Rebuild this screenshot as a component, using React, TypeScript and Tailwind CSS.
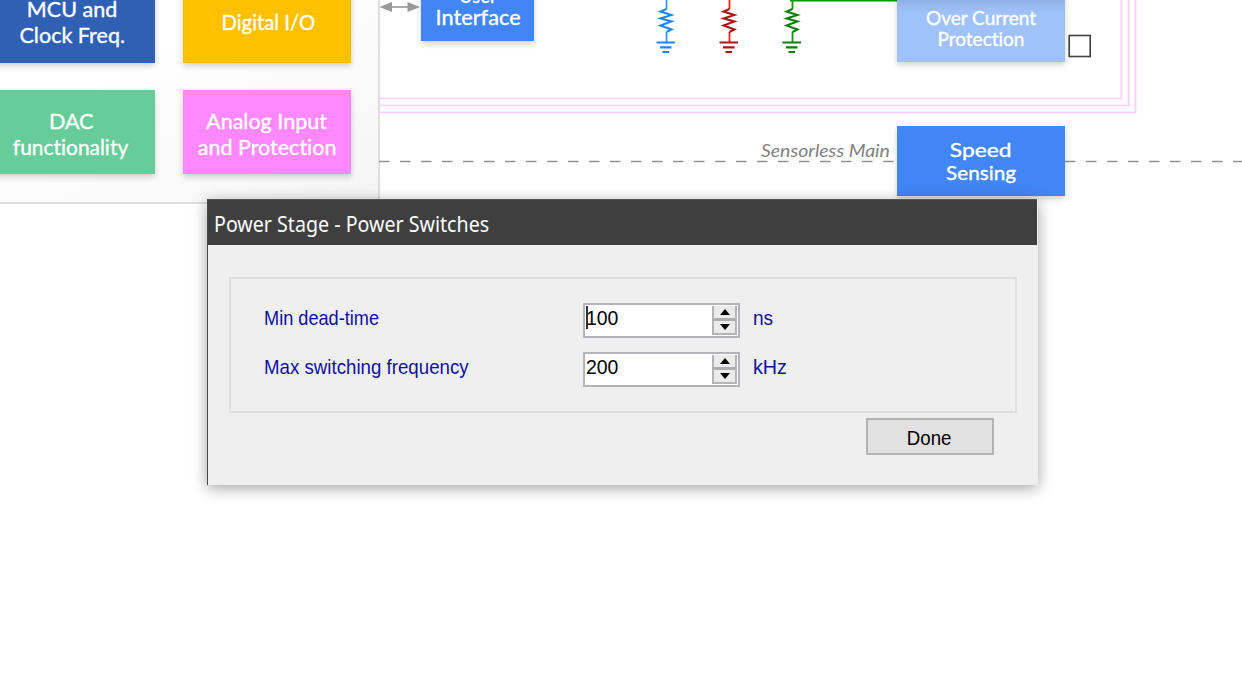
import React from "react";

type NodeProps = { box: string; lines: { text: string; scale: string }[]; leading: string };

function Block({ box, lines, leading }: NodeProps) {
  return (
    <div
      className={`absolute flex flex-col items-center justify-center whitespace-nowrap font-['Lato',sans-serif] font-normal text-white shadow-[0_3px_6px_rgba(0,0,0,0.18)] [-webkit-text-stroke:0.35px_white] [font-variant-ligatures:none] ${box}`}
    >
      {lines.map((line) => (
        <div key={line.text} className={`${leading} ${line.scale}`}>
          {line.text}
        </div>
      ))}
    </div>
  );
}

function Resistor({ x, wire, part }: { x: number; wire: string; part: string }) {
  return (
    <g transform={`translate(${x} 0)`} fill="none">
      <path d="M0.5 0V9M0.5 32V42" stroke={wire} strokeWidth="1.8" />
      <path
        d="M0.5 9L-5.500 11.5L5.500 15L-5.500 18.5L5.500 21.5L-5.500 25.5L5.500 29.5L0.5 32"
        stroke={part}
        strokeWidth="2"
      />
      <path d="M-9.5 42.5H9" stroke={part} strokeWidth="2" />
      <path d="M-6 47.3H5.500M-3.500 52H3" stroke={part} strokeWidth="2.2" />
    </g>
  );
}

function Wiring() {
  return (
    <svg className="absolute left-0 top-0" width="1242" height="678" viewBox="0 0 1242 678">
      <g stroke="#999" fill="#999">
        <path d="M388 7H412" strokeWidth="1.6" />
        <path d="M379.500 7L392 2V12ZM420 7L407.500 2V12Z" stroke="none" />
      </g>
      <g fill="none" stroke="#ffccff" strokeWidth="1.7">
        <path d="M380 98.500H1121.500V0" />
        <path d="M380 105.500H1128.700V0" />
        <path d="M380 112.500H1135.500V0" />
      </g>
      <path d="M379 161.500H897" stroke="#929292" strokeWidth="1.5" strokeDasharray="10.500 10.500" />
      <path d="M1065 161.500H1242" stroke="#929292" strokeWidth="1.5" strokeDasharray="10.500 10.500" />
      <path d="M790 0.500H897" stroke="#009900" strokeWidth="2" />
      <Resistor x={666} wire="#3399ff" part="#1a86f5" />
      <Resistor x={729} wire="#ff1a1a" part="#ab1414" />
      <Resistor x={792} wire="#00a000" part="#0b7d0b" />
      <rect x="1069.200" y="35.500" width="21" height="21" fill="#fff" stroke="#404040" strokeWidth="1.6" />
    </svg>
  );
}

function Spinner() {
  return (
    <div className="mt-px flex h-[29px] w-[25px] flex-col border-x-2 border-b-2 border-[#b4b4b4] bg-[#ebebeb]">
      <div className="flex flex-1 items-center justify-center border-b-[3px] border-[#adadad]">
        <svg width="10" height="6" viewBox="0 0 10 6">
          <path d="M0 6L5 0L10 6Z" />
        </svg>
      </div>
      <div className="flex h-3 items-center justify-center">
        <svg width="10" height="6" viewBox="0 0 10 6">
          <path d="M0 0L5 6L10 0Z" />
        </svg>
      </div>
    </div>
  );
}

function Field({ label, value, unit, scale, unitScale, caret }: {
  label: string; value: string; unit: string; scale: string; unitScale: string; caret?: boolean;
}) {
  return (
    <div className="flex h-[35px] items-start text-[#10109c]">
      <div className="w-[319px] pt-px">
        <span className={`inline-block origin-left ${scale}`}>{label}</span>
      </div>
      <div className="flex h-[35px] w-[157px] justify-between border-2 border-[#b3b3b9] bg-white pr-px text-black">
        <div className="flex items-start pl-px">
          <span className={caret ? "mt-px h-[23px] w-0.5 -mr-0.5 bg-[#333]" : "w-0"} />
          <span className="-mt-px inline-block origin-left scale-x-[0.925]">{value}</span>
        </div>
        <Spinner />
      </div>
      <span className={`ml-3 inline-block origin-left pl-px pt-px ${unitScale}`}>{unit}</span>
    </div>
  );
}

function Dialog() {
  return (
    <div className="absolute left-[207px] top-[199px] flex h-[286px] w-[831px] flex-col whitespace-nowrap border-l border-[#484848] bg-[#efefef] shadow-[0_3px_14px_rgba(0,0,0,0.36)]">
      <div className="mr-px flex h-[46px] shrink-0 items-center border-t border-[#555] bg-[#3f3f3f] pl-1.5 pt-1 font-['Noto_Sans',sans-serif] text-[21px] text-white">
        <span className="inline-block origin-left scale-x-[0.935]">Power Stage - Power Switches</span>
      </div>
      <div className="ml-[21px] mr-[21px] mt-8 flex h-[136px] flex-col gap-3.5 border-2 border-[#dfdfdf] pl-[33px] pt-6 font-['Liberation_Sans',Arial,sans-serif] text-[21px] leading-[27px]">
        <Field label="Min dead-time" value="100" unit="ns" scale="scale-x-[0.865]" unitScale="scale-x-[0.91]" caret />
        <Field label="Max switching frequency" value="200" unit="kHz" scale="scale-x-[0.89]" unitScale="scale-x-[0.94]" />
      </div>
      <button className="ml-auto mr-[44px] mt-[5px] flex h-[37px] w-32 items-center justify-center border-2 border-[#b3b3b3] bg-[#e1e1e1] pr-0.5 pt-0.5 font-['Liberation_Sans',Arial,sans-serif] text-[21px] text-black">
        <span className="inline-block scale-x-[0.89]">Done</span>
      </button>
    </div>
  );
}

export default function App() {
  return (
    <main className="relative h-[678px] w-[1242px] overflow-hidden bg-white">
      <div className="absolute -top-10 left-[-40px] h-[244px] w-[420px] border-2 border-[#dedede] bg-linear-to-br from-white from-40% to-[#f5f5f5]" />
      <Wiring />
      <Block
        box="left-[-13px] top-[-21.500px] h-[84px] w-[168px] bg-[#2f60b4] pl-0.5 pt-[3px] text-[20.500px]"
        leading="leading-[26px]"
        lines={[{ text: "MCU and", scale: "scale-x-[1.05]" }, { text: "Clock Freq.", scale: "scale-x-[1.05]" }]}
      />
      <Block
        box="left-[183px] top-[-21.500px] h-[84px] w-[168px] bg-[#ffc000] pl-0.5 pt-[3px] text-[20.500px]"
        leading="leading-[26px]"
        lines={[{ text: "Digital I/O", scale: "scale-x-[0.99]" }]}
      />
      <Block
        box="left-[-13px] top-[90px] h-[84px] w-[168px] bg-[#66cc99] pt-[3px] text-[20.500px]"
        leading="leading-[26px]"
        lines={[{ text: "DAC", scale: "scale-x-[1.05]" }, { text: "functionality", scale: "scale-x-[1.02]" }]}
      />
      <Block
        box="left-[182.500px] top-[90px] h-[84px] w-[168px] bg-[#ff88ff] pl-px pt-[3px] text-[20.500px]"
        leading="leading-[26px]"
        lines={[{ text: "Analog Input", scale: "scale-x-[1.05]" }, { text: "and Protection", scale: "scale-x-[1.05]" }]}
      />
      <Block
        box="left-[421px] top-[-29px] h-[70px] w-[113px] bg-[#4285f4] pl-px text-[20.500px]"
        leading="leading-[22px]"
        lines={[{ text: "User", scale: "scale-x-[0.9]" }, { text: "Interface", scale: "scale-x-[1.06]" }]}
      />
      <Block
        box="left-[897px] top-[-8px] h-[70px] w-[168px] bg-[#a0c2fa] bg-linear-to-b from-[#8eafe5] from-8% to-[#a0c2fa] to-30% pt-0.5 text-[19px]"
        leading="leading-[21px]"
        lines={[{ text: "Over Current", scale: "scale-x-[1.0]" }, { text: "Protection", scale: "scale-x-[1.0]" }]}
      />
      <Block
        box="left-[897px] top-[126px] h-[70px] w-[168px] bg-[#4285f4] text-[19px]"
        leading="leading-[23px]"
        lines={[{ text: "Speed", scale: "scale-x-[1.2]" }, { text: "Sensing", scale: "scale-x-[1.09]" }]}
      />
      <div className="absolute left-[761px] top-[138px] origin-left scale-x-[1.08] whitespace-nowrap font-['Lato',sans-serif] text-[18px] italic leading-6 text-[#808080]">
        Sensorless Main
      </div>
      <Dialog />
    </main>
  );
}
